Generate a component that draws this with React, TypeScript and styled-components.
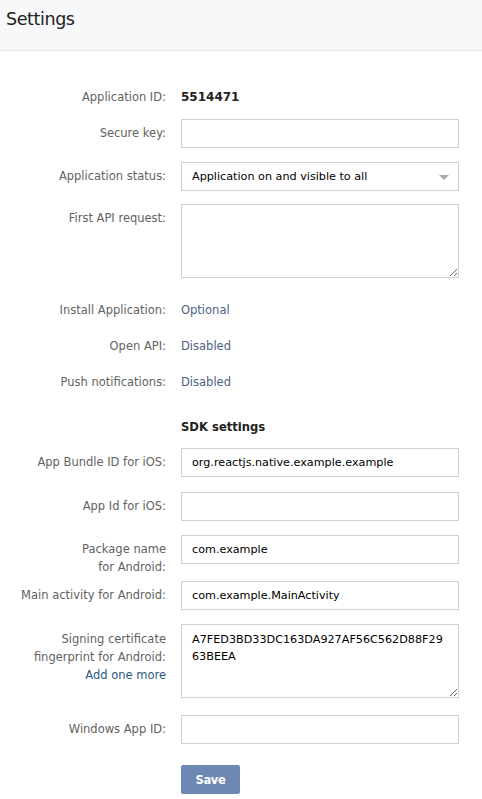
import React from "react";
import styled, { createGlobalStyle } from "styled-components";

const Global = createGlobalStyle`
  html, body { margin: 0; padding: 0; background: #ffffff; }
  body { font-family: "DejaVu Sans", Verdana, sans-serif; }
  * { box-sizing: border-box; }
`;

const Page = styled.div`
  width: 482px;
  min-height: 799px;
  background: #fff;
`;

const Header = styled.header`
  height: 51px;
  background: #f7f8fa;
  border-bottom: 1px solid #e7e8ec;
  display: flex;
  align-items: center;
  padding: 0 6px 13px;
`;

const Title = styled.h1`
  margin: 0;
  font-family: "DejaVu Sans", Verdana, sans-serif;
  font-weight: normal;
  font-size: 17.5px;
  color: #222;
  letter-spacing: -0.4px;
`;

const Form = styled.div`
  display: flex;
  flex-direction: column;
  padding-top: 37px;
`;

const Row = styled.div<{ $mb: number }>`
  display: flex;
  align-items: flex-start;
  margin-bottom: ${(p) => p.$mb}px;
`;

const Label = styled.div<{ $pt?: number }>`
  width: 166px;
  flex: none;
  text-align: right;
  font-size: 11.5px;
  line-height: 18px;
  color: #626262;
  padding-top: ${(p) => p.$pt ?? 0}px;
`;

const Field = styled.div`
  margin-left: 15px;
  width: 278px;
  flex: none;
  position: relative;
`;

const Value = styled.div<{ $strong?: boolean; $link?: boolean }>`
  font-size: ${(p) => (p.$strong ? "12px" : "11.5px")};
  line-height: 18px;
  font-weight: ${(p) => (p.$strong ? "bold" : "normal")};
  color: ${(p) => (p.$strong ? "#222" : p.$link ? "#4c6285" : "#222")};
`;

const SectionTitle = styled.div`
  font-size: 11.6px;
  line-height: 18px;
  font-weight: bold;
  color: #222;
`;

const Input = styled.input`
  display: block;
  width: 278px;
  height: 29px;
  border: 1px solid #c9d0d8;
  border-radius: 0;
  padding: 0 10px;
  font-family: "DejaVu Sans", Verdana, sans-serif;
  font-size: 11.2px;
  color: #000;
  background: #fff;
  outline: none;
`;

const TextArea = styled.textarea`
  display: block;
  width: 278px;
  height: 74px;
  border: 1px solid #c9d0d8;
  border-radius: 0;
  padding: 6px 13px 6px 10px;
  font-family: "DejaVu Sans", Verdana, sans-serif;
  font-size: 11.2px;
  line-height: 17px;
  color: #000;
  resize: both;
  outline: none;
  word-break: break-all;
`;

const Select = styled.div`
  height: 29px;
  border: 1px solid #c9d0d8;
  padding: 0 10px;
  display: flex;
  align-items: center;
  font-size: 11.2px;
  color: #000;
`;

const Arrow = styled.span`
  position: absolute;
  right: 10px;
  top: 13px;
  width: 0;
  height: 0;
  border-left: 5px solid transparent;
  border-right: 5px solid transparent;
  border-top: 5px solid #a8acb0;
`;

const LinkText = styled.span`
  color: #2a5885;
`;

const SaveButton = styled.button`
  width: 59px;
  height: 29px;
  border: none;
  border-radius: 2px;
  background: #6d88b3;
  color: #fff;
  font-family: "DejaVu Sans", Verdana, sans-serif;
  font-weight: bold;
  font-size: 11.5px;
  padding: 0;
  letter-spacing: -0.3px;
`;

export default function App() {
  return (
    <Page>
      <Global />
      <Header>
        <Title>Settings</Title>
      </Header>
      <Form>
        <Row $mb={13}>
          <Label>Application ID:</Label>
          <Field>
            <Value $strong>5514471</Value>
          </Field>
        </Row>
        <Row $mb={14}>
          <Label $pt={5}>Secure key:</Label>
          <Field>
            <Input defaultValue="" />
          </Field>
        </Row>
        <Row $mb={13}>
          <Label $pt={5}>Application status:</Label>
          <Field>
            <Select>Application on and visible to all</Select>
            <Arrow />
          </Field>
        </Row>
        <Row $mb={23}>
          <Label $pt={5}>First API request:</Label>
          <Field>
            <TextArea defaultValue="" />
          </Field>
        </Row>
        <Row $mb={18}>
          <Label>Install Application:</Label>
          <Field>
            <Value $link>Optional</Value>
          </Field>
        </Row>
        <Row $mb={18}>
          <Label>Open API:</Label>
          <Field>
            <Value $link>Disabled</Value>
          </Field>
        </Row>
        <Row $mb={27}>
          <Label>Push notifications:</Label>
          <Field>
            <Value $link>Disabled</Value>
          </Field>
        </Row>
        <Row $mb={12}>
          <Label />
          <Field>
            <SectionTitle>SDK settings</SectionTitle>
          </Field>
        </Row>
        <Row $mb={15}>
          <Label $pt={5}>App Bundle ID for iOS:</Label>
          <Field>
            <Input defaultValue="org.reactjs.native.example.example" />
          </Field>
        </Row>
        <Row $mb={14}>
          <Label $pt={5}>App Id for iOS:</Label>
          <Field>
            <Input defaultValue="" />
          </Field>
        </Row>
        <Row $mb={5}>
          <Label $pt={5}>
            Package name
            <br />
            for Android:
          </Label>
          <Field>
            <Input defaultValue="com.example" />
          </Field>
        </Row>
        <Row $mb={14}>
          <Label $pt={5}>Main activity for Android:</Label>
          <Field>
            <Input defaultValue="com.example.MainActivity" />
          </Field>
        </Row>
        <Row $mb={17}>
          <Label $pt={6}>
            Signing certificate
            <br />
            fingerprint for Android:
            <br />
            <LinkText>Add one more</LinkText>
          </Label>
          <Field>
            <TextArea defaultValue="A7FED3BD33DC163DA927AF56C562D88F2963BEEA" />
          </Field>
        </Row>
        <Row $mb={21}>
          <Label $pt={5}>Windows App ID:</Label>
          <Field>
            <Input defaultValue="" />
          </Field>
        </Row>
        <Row $mb={6}>
          <Label />
          <Field>
            <SaveButton>Save</SaveButton>
          </Field>
        </Row>
      </Form>
    </Page>
  );
}
